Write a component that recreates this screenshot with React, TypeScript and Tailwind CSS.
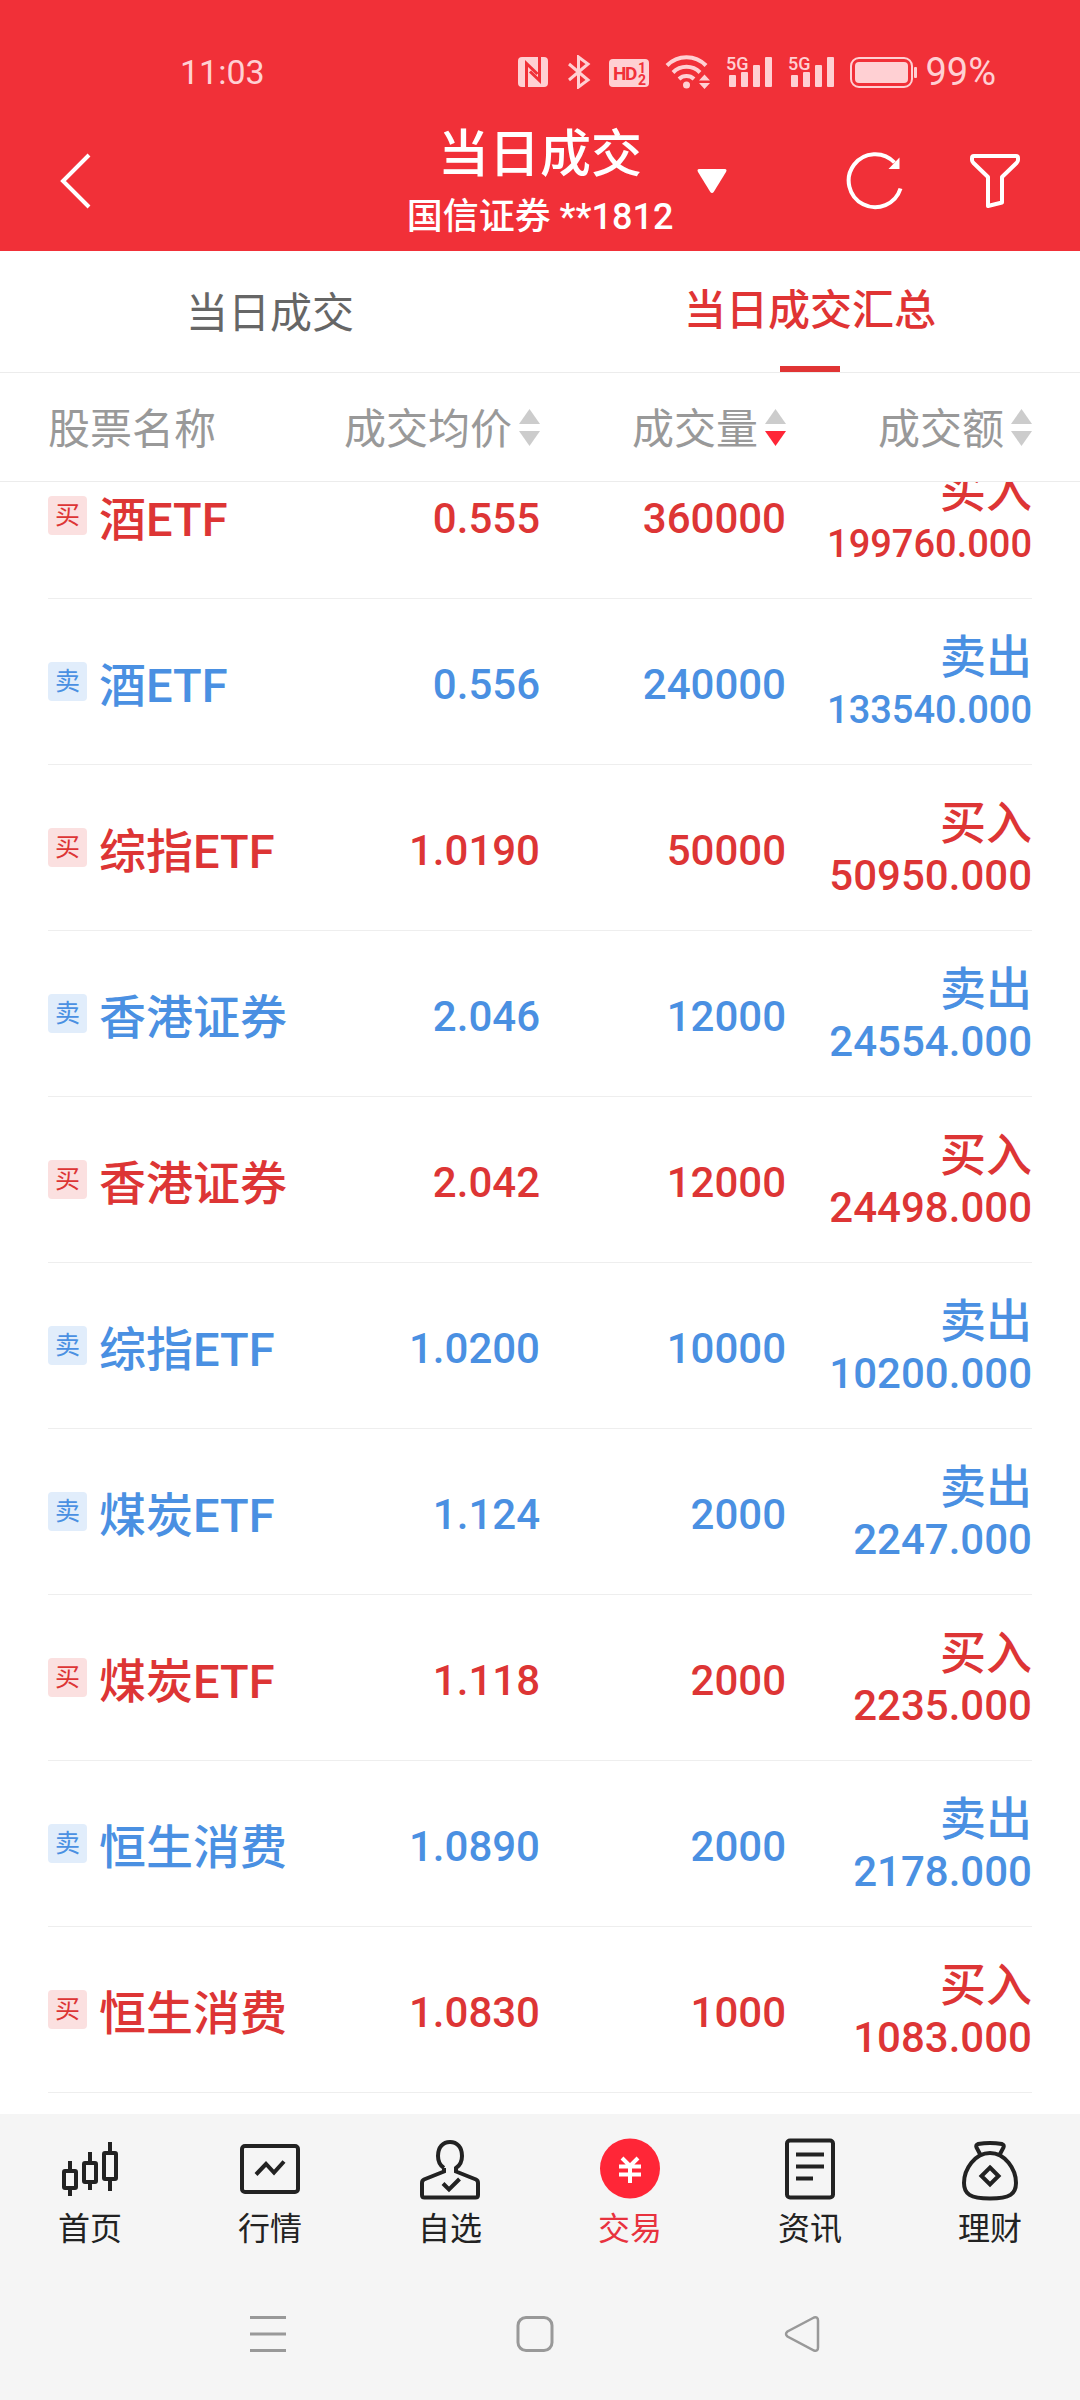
import type { ReactNode } from "react";

type Side = "buy" | "sell";
type Trade = {
  side: Side;
  name: string;
  price: string;
  volume: string;
  amount: string;
};

const TRADES: Trade[] = [
  { side: "buy", name: "酒ETF", price: "0.555", volume: "360000", amount: "199760.000" },
  { side: "sell", name: "酒ETF", price: "0.556", volume: "240000", amount: "133540.000" },
  { side: "buy", name: "综指ETF", price: "1.0190", volume: "50000", amount: "50950.000" },
  { side: "sell", name: "香港证券", price: "2.046", volume: "12000", amount: "24554.000" },
  { side: "buy", name: "香港证券", price: "2.042", volume: "12000", amount: "24498.000" },
  { side: "sell", name: "综指ETF", price: "1.0200", volume: "10000", amount: "10200.000" },
  { side: "sell", name: "煤炭ETF", price: "1.124", volume: "2000", amount: "2247.000" },
  { side: "buy", name: "煤炭ETF", price: "1.118", volume: "2000", amount: "2235.000" },
  { side: "sell", name: "恒生消费", price: "1.0890", volume: "2000", amount: "2178.000" },
  { side: "buy", name: "恒生消费", price: "1.0830", volume: "1000", amount: "1083.000" },
];

function Signal() {
  return (
    <svg width="46" height="46" viewBox="0 -6 46 46" fill="currentColor" aria-hidden>
      <text x="0" y="15" fontSize="18" fontWeight="500" fontFamily="Roboto, sans-serif">
        5G
      </text>
      <rect x="3" y="20" width="7" height="12" rx="1" />
      <rect x="15" y="17" width="7" height="15" rx="1" />
      <rect x="27" y="10" width="7" height="22" rx="1" />
      <rect x="39" y="2" width="7" height="30" rx="1" />
    </svg>
  );
}

function StatusBar() {
  return (
    <div className="flex h-11 items-center justify-between pr-[84px] pl-[180px] text-[#ffd0d3]">
      <span className="text-[34px] leading-11">11:03</span>
      <div className="flex items-center gap-4">
        <svg width="30" height="34" viewBox="0 0 30 34" aria-hidden>
          <rect y="2" width="30" height="30" rx="4" fill="currentColor" />
          <path
            d="M8.5 32V8.5L19.5 19M21.5 2v23.5L12 16.5"
            fill="none"
            stroke="#f13038"
            strokeWidth="3"
          />
        </svg>
        <svg width="29" height="34" viewBox="0 0 29 34" fill="none" stroke="currentColor" strokeWidth="3" aria-hidden>
          <path d="M5 9l19 16-9.5 7V2L24 9 5 25" />
        </svg>
        <svg width="40" height="34" viewBox="0 0 40 34" aria-hidden>
          <rect y="4" width="40" height="28" rx="4" fill="currentColor" />
          <g fill="#f13038" fontFamily="Roboto, sans-serif" fontWeight="700">
            <text x="4" y="25" fontSize="19">H</text>
            <text x="16" y="25" fontSize="19">D</text>
            <text x="29" y="18" fontSize="14">1</text>
            <text x="29" y="30" fontSize="14">2</text>
          </g>
        </svg>
        <svg width="45" height="34" viewBox="0 0 45 34" fill="none" stroke="currentColor" strokeWidth="4" aria-hidden>
          <path d="M2 10.5a27 27 0 0 1 39 0M8 17.5a19 19 0 0 1 27 0M14 24a11 11 0 0 1 15 0" />
          <circle cx="21.5" cy="30" r="3.5" fill="currentColor" stroke="none" />
          <path d="M34 25.5l5.5-6 5.5 6zM34 28l5.5 6 5.5-6z" fill="currentColor" stroke="none" />
        </svg>
        <Signal />
        <Signal />
        <div className="flex items-center gap-2">
          <svg width="67" height="34" viewBox="0 0 67 34" fill="currentColor" aria-hidden>
            <rect x="1" y="3" width="61" height="29" rx="8" fill="none" stroke="currentColor" strokeWidth="2" />
            <rect x="5" y="7" width="53" height="21" rx="4" />
            <rect x="64" y="12" width="3" height="11" rx="1" />
          </svg>
          <span className="text-[38px] leading-11">99%</span>
        </div>
      </div>
    </div>
  );
}

function TitleBar() {
  return (
    <div className="grid grid-cols-[1fr_auto_1fr] items-center pt-5 pb-1">
      <button type="button" aria-label="返回" className="w-fit pl-[60px]">
        <svg width="32" height="56" viewBox="0 0 32 56" fill="none" stroke="currentColor" strokeWidth="4">
          <path d="M29 2L3 28l26 26" />
        </svg>
      </button>
      <div className="pt-2 text-center font-medium">
        <h1 className="text-[51px] leading-[65px]">当日成交</h1>
        <p className="text-[36px] leading-[60px]">国信证券 **1812</p>
      </div>
      <div className="flex items-center justify-between pr-[60px] pl-6">
        <button type="button" aria-label="切换账户">
          <svg width="30" height="26" viewBox="0 0 30 26" fill="currentColor">
            <path d="M2.5 1h25q3 0 1.5 3L17 23.5q-2 3-4 0L1 4q-1.5-3 1.5-3z" />
          </svg>
        </button>
        <div className="flex items-center gap-[66px]">
          <button type="button" aria-label="刷新">
            <svg width="58" height="58" viewBox="0 0 58 58" fill="none" stroke="currentColor" strokeWidth="4">
              <path d="M54.5 36.5a26.5 26.5 0 1 1-6-26" />
              <path d="M53.5 5.5v11.5h-11z" fill="currentColor" stroke="none" />
            </svg>
          </button>
          <button type="button" aria-label="筛选">
            <svg width="50" height="56" viewBox="0 0 50 56" fill="none" stroke="currentColor" strokeWidth="4" strokeLinejoin="round">
              <path d="M4 3h42q2 0 2 2v2q0 1.500-1.500 3L32 24v25.500L18 53V24L3.500 10Q2 8.500 2 7V5q0-2 2-2z" />
            </svg>
          </button>
        </div>
      </div>
    </div>
  );
}

function Tabs() {
  return (
    <div role="tablist" className="grid grid-cols-2 border-b border-[#ececec] text-[42px] leading-[60px]">
      <button type="button" role="tab" aria-selected={false} className="pt-1 text-[#666]">
        当日成交
      </button>
      <button
        type="button"
        role="tab"
        aria-selected
        className="flex flex-col items-center pt-[30px] font-medium text-[#e03434]"
      >
        当日成交汇总
        <span className="mt-[25px] h-1.5 w-[60px] bg-[#e03434]" />
      </button>
    </div>
  );
}

function SortHeader({ label, desc }: { label: string; desc?: boolean }) {
  return (
    <th scope="col" className="font-normal">
      <button type="button" className="flex w-full items-center justify-end gap-[7px]">
        <span className="pt-1">{label}</span>
        <svg width="21" height="37" viewBox="0 0 21 37" fill="#ccc" aria-hidden>
          <path d="M10.5 0L21 15H0z" />
          <path d="M10.5 37L0 22h21z" className={desc ? "fill-[#ff2637]" : ""} />
        </svg>
      </button>
    </th>
  );
}

function TradeRow({ trade }: { trade: Trade }) {
  const buy = trade.side === "buy";
  // six-figure amounts drop one size so they stay inside the column
  const amountSize = trade.amount.length > 9 ? "text-[38px]" : "text-[42px]";

  return (
    <tr
      className={`mx-12 grid h-[166px] grid-cols-4 items-center border-b border-[#eee] text-right text-[42px] font-medium ${
        buy ? "text-[#dd3535]" : "text-[#4a90e2]"
      }`}
    >
      <td className="flex items-center gap-3 text-left whitespace-nowrap">
        <span
          className={`flex size-[39px] flex-none items-center justify-center rounded-sm text-[25px] leading-none font-normal ${
            buy ? "bg-[#fbe0e0]" : "bg-[#e1edfb]"
          }`}
        >
          {buy ? "买" : "卖"}
        </span>
        <span className="pt-2 text-[47px] leading-[60px]">{trade.name}</span>
      </td>
      <td className="pt-1.5">{trade.price}</td>
      <td className="pt-1.5">{trade.volume}</td>
      <td className="pt-1">
        <div className="text-[46px] leading-[52px]">{buy ? "买入" : "卖出"}</div>
        <div className={`leading-[54px] ${amountSize}`}>{trade.amount}</div>
      </td>
    </tr>
  );
}

function NavIcon({ children }: { children: ReactNode }) {
  return (
    <svg width="60" height="64" viewBox="0 0 60 64" fill="none" stroke="currentColor" strokeWidth="4" aria-hidden>
      {children}
    </svg>
  );
}

const NAV: { label: string; active?: boolean; icon: ReactNode }[] = [
  {
    label: "首页",
    icon: (
      <>
        <rect x="4" y="33" width="12" height="17" rx="1" />
        <rect x="24" y="25" width="12" height="19" rx="1" />
        <rect x="44" y="15" width="12" height="26" rx="1" />
        <path d="M10 23v9M10 51v7M30 14v10M30 45v7M50 4v10M50 42v11" />
      </>
    ),
  },
  {
    label: "行情",
    icon: (
      <>
        <rect x="2" y="8" width="56" height="46" rx="3" />
        <path d="M16 36.5L26 26l8 8.5L44 23.5" />
      </>
    ),
  },
  {
    label: "自选",
    icon: (
      <>
        <path d="M24 30v3.5L4 41.5q-2 1-2 3.5v12q0 2.5 2.5 2.5h51q2.5 0 2.5-2.5V45q0-2.5-2-3.5l-20-8V30c4-2.5 6-6 6-12 0-9-5-14-12-14S18 9 18 18c0 6 2 9.5 6 12" />
        <path d="M23 45.5l6 6L39.5 41" />
      </>
    ),
  },
  {
    label: "交易",
    active: true,
    icon: (
      <>
        <circle cx="30" cy="30.5" r="30" fill="#ff2637" stroke="none" />
        <path d="M22 20l8 8 8-8M19 28.5h22M19 36.5h22M30 28v17" stroke="#fff" />
      </>
    ),
  },
  {
    label: "资讯",
    icon: (
      <>
        <rect x="7" y="2.5" width="46" height="57" rx="3" />
        <path d="M16 16.5h28M16 28.5h28M16 40.5h17" />
      </>
    ),
  },
  {
    label: "理财",
    icon: (
      <>
        <path d="M20.5 17L16.5 9.5q-1-2.5 1.5-3.5 12-2 24 0 2.5 1 1.5 3.5L39.5 17" />
        <path d="M30 15C15 15 4 31 4 45c0 11 6 15.5 26 15.5S56 56 56 45C56 31 45 15 30 15z" />
        <path d="M30 29.5l8.5 8.5-8.5 8.5-8.5-8.5z" />
      </>
    ),
  },
];

function BottomNav() {
  return (
    <nav className="grid grid-cols-6 pt-6 pb-4 text-[32px] leading-[46px]">
      {NAV.map((item) => (
        <a
          key={item.label}
          href="#"
          aria-current={item.active ? "page" : undefined}
          className={`flex flex-col items-center gap-1 ${item.active ? "text-[#e8323e]" : "text-[#222]"}`}
        >
          <NavIcon>{item.icon}</NavIcon>
          {item.label}
        </a>
      ))}
    </nav>
  );
}

function SystemNav() {
  return (
    <div className="grid h-[132px] grid-cols-3 items-center justify-items-center pr-36 pl-[134px] text-[#999]">
      <button type="button" aria-label="最近任务">
        <svg width="36" height="38" viewBox="0 0 36 38" stroke="currentColor" strokeWidth="3">
          <path d="M0 2.5h36M0 19h36M0 35.5h36" />
        </svg>
      </button>
      <button type="button" aria-label="主屏幕">
        <svg width="38" height="38" viewBox="0 0 38 38" fill="none" stroke="currentColor" strokeWidth="3">
          <rect x="2" y="2.5" width="34" height="33" rx="8" />
        </svg>
      </button>
      <button type="button" aria-label="返回上一级">
        <svg width="36" height="38" viewBox="0 0 36 38" fill="none" stroke="currentColor" strokeWidth="2.5">
          <path d="M30 2.5L3.5 16.5q-3 2.5 0 5L30 35.5q4 1 4-3V5.5q0-4-4-3z" />
        </svg>
      </button>
    </div>
  );
}

export default function App() {
  return (
    <div className="flex min-h-screen flex-col bg-white font-[Roboto,'Noto_Sans_CJK_SC',sans-serif]">
      <header className="bg-[#f13038] pt-[50px] text-white">
        <StatusBar />
        <TitleBar />
      </header>

      <Tabs />

      <main className="flex-1 overflow-hidden">
        <table className="block">
          <thead className="relative z-10 block border-b border-[#ececec] bg-white">
            <tr className="mx-12 grid h-[108px] grid-cols-4 items-center text-[42px] text-[#999]">
              <th scope="col" className="pt-1 text-left font-normal">
                股票名称
              </th>
              <SortHeader label="成交均价" />
              <SortHeader label="成交量" desc />
              <SortHeader label="成交额" />
            </tr>
          </thead>
          {/* the list rests slightly scrolled, its first row tucked under the header */}
          <tbody className="-mt-[49px] block">
            {TRADES.map((trade) => (
              <TradeRow key={`${trade.name}-${trade.side}`} trade={trade} />
            ))}
          </tbody>
        </table>
      </main>

      <footer className="bg-[#f5f5f5]">
        <BottomNav />
        <SystemNav />
      </footer>
    </div>
  );
}
